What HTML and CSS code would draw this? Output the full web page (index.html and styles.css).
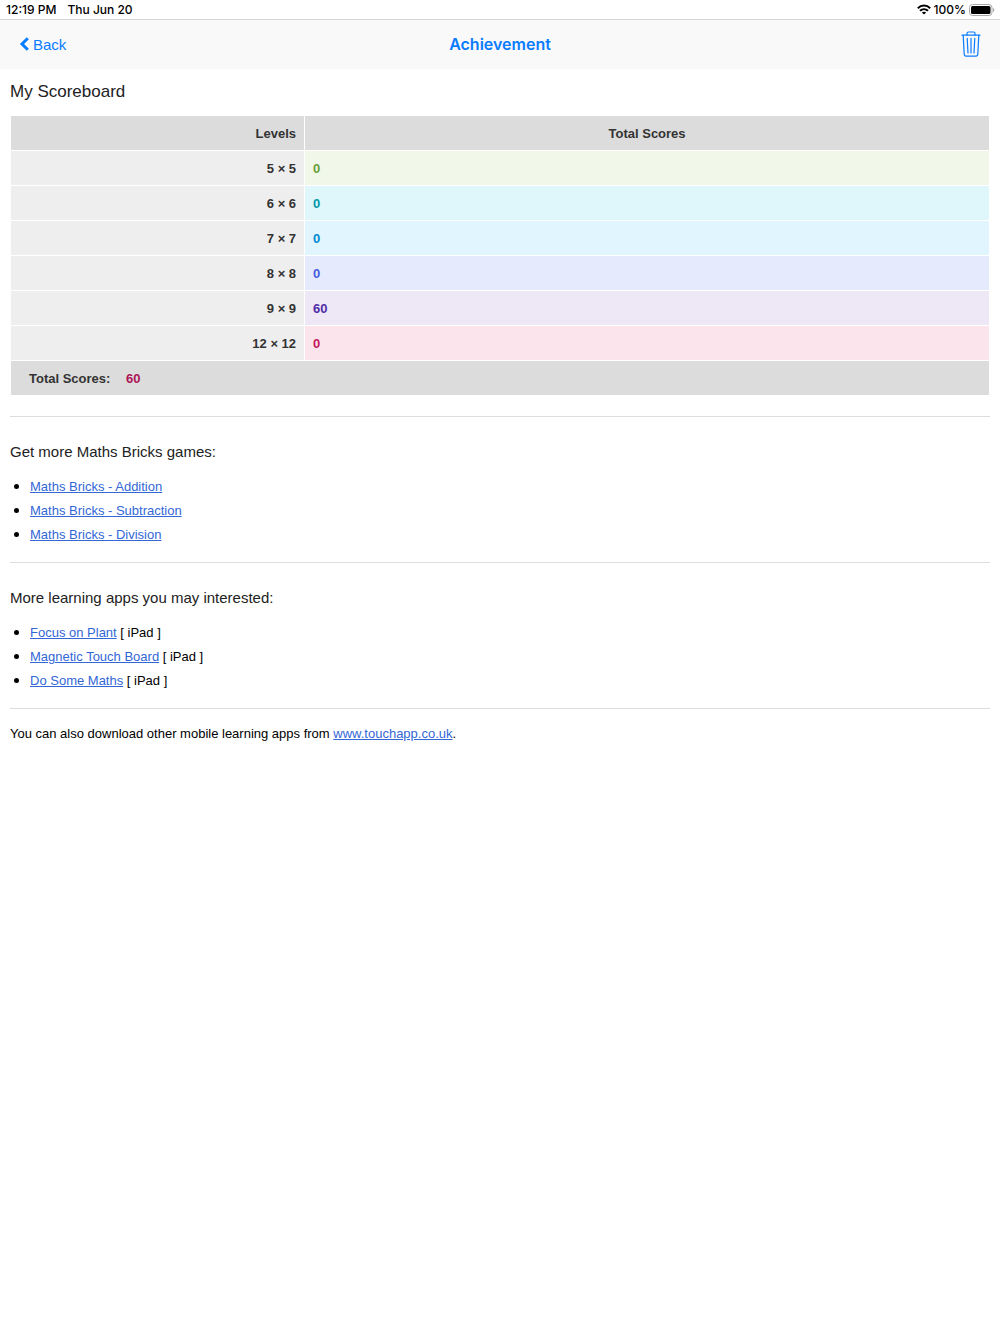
FILE: index.html
```html
<!DOCTYPE html>
<html lang="en">
<head>
  <meta charset="UTF-8">
  <meta name="viewport" content="width=device-width, initial-scale=1">
  <title>Achievement</title>
  <link rel="stylesheet" href="styles.css">
</head>
<body>

  <div class="status-bar">
    <span>12:19 PM</span>
    <span class="date">Thu Jun 20</span>
    <div class="status-right">
      <svg class="wifi" width="14" height="11" viewBox="0 0 14 11" fill="none" stroke="#000" stroke-width="2">
        <path d="M0.8 4.2C4.4 0.7 9.6 0.7 13.2 4.2"/>
        <path d="M3 6.8C5.3 4.6 8.7 4.6 11 6.8"/>
        <path d="M7 10.6L4.8 8.6C6 7.4 8 7.4 9.2 8.6Z" fill="#000" stroke="none"/>
      </svg>
      <span>100%</span>
      <svg class="battery" width="26" height="12" viewBox="0 0 26 12">
        <rect x="0.5" y="0.5" width="22.5" height="11" rx="3" fill="#fff" stroke="#aaa"/>
        <rect x="2" y="2" width="19.5" height="8" rx="1.5" fill="#000"/>
        <path d="M24 4C25.8 4.6 25.8 7.4 24 8Z" fill="#aaa"/>
      </svg>
    </div>
  </div>

  <header class="navbar">
    <button type="button" class="back">
      <svg width="10" height="14" viewBox="0 0 10 14" fill="none" stroke="currentColor" stroke-width="3">
        <path d="M8.8 1.2L3 7L8.8 12.8"/>
      </svg>
      Back
    </button>
    <h1>Achievement</h1>
    <button type="button" class="trash" aria-label="Clear scores">
      <svg width="20" height="26" viewBox="0 0 20 26" fill="none" stroke="currentColor" stroke-width="1.2" stroke-linejoin="round" stroke-linecap="round">
        <path d="M1 4.2H19"/>
        <path d="M6 4V2.4C6 1.4 6.6 1 7.4 1H12.6C13.4 1 14 1.4 14 2.4V4"/>
        <path d="M2.2 4.4L3.2 23.4C3.3 24.6 3.8 25.2 5 25.2H15C16.2 25.2 16.7 24.6 16.8 23.4L17.8 4.4"/>
        <path d="M6.2 7.4L7 22M10 7.4V22M13.8 7.4L13 22"/>
      </svg>
    </button>
  </header>

  <main>
    <h2>My Scoreboard</h2>
    <table class="scores">
      <thead>
        <tr><th class="level">Levels</th><th>Total Scores</th></tr>
      </thead>
      <tbody>
        <tr class="green"><th class="level">5 × 5</th><td>0</td></tr>
        <tr class="cyan"><th class="level">6 × 6</th><td>0</td></tr>
        <tr class="blue"><th class="level">7 × 7</th><td>0</td></tr>
        <tr class="indigo"><th class="level">8 × 8</th><td>0</td></tr>
        <tr class="purple"><th class="level">9 × 9</th><td>60</td></tr>
        <tr class="pink"><th class="level">12 × 12</th><td>0</td></tr>
      </tbody>
      <tfoot>
        <tr><td colspan="2">Total Scores: <span class="total">60</span></td></tr>
      </tfoot>
    </table>

    <section>
      <h3>Get more Maths Bricks games:</h3>
      <ul>
        <li><a href="#">Maths Bricks - Addition</a></li>
        <li><a href="#">Maths Bricks - Subtraction</a></li>
        <li><a href="#">Maths Bricks - Division</a></li>
      </ul>
    </section>

    <section>
      <h3>More learning apps you may interested:</h3>
      <ul>
        <li><a href="#">Focus on Plant</a> [ iPad ]</li>
        <li><a href="#">Magnetic Touch Board</a> [ iPad ]</li>
        <li><a href="#">Do Some Maths</a> [ iPad ]</li>
      </ul>
    </section>

    <p class="download">You can also download other mobile learning apps from <a href="#">www.touchapp.co.uk</a>.</p>
  </main>

</body>
</html>
```

FILE: styles.css
```css
* {
  box-sizing: border-box;
}
body {
  margin: 0;
  background: #ffffff;
  color: #000000;
  font-family: "Liberation Sans", Arial, sans-serif;
  font-size: 13px;
}
.status-bar {
  display: flex;
  align-items: center;
  height: 20px;
  padding: 0 5px 0 6px;
  border-bottom: 1px solid #d4d4d4;
  background: #ffffff;
  font-family: Inter, sans-serif;
  font-size: 12px;
  font-weight: 500;
}
.date {
  margin-left: 11px;
}
.status-right {
  display: flex;
  align-items: center;
  gap: 3px;
  margin-left: auto;
}
.navbar {
  display: grid;
  grid-template-columns: 1fr auto 1fr;
  align-items: center;
  height: 49px;
  padding: 0 19px 1px;
  background: #f9f9f9;
  color: #0a7cff;
}
.navbar h1 {
  margin: 0;
  font-family: Inter, sans-serif;
  font-size: 16px;
  font-weight: 600;
}
.navbar button {
  display: flex;
  align-items: center;
  padding: 0;
  border: none;
  background: none;
  color: inherit;
  font-family: inherit;
  font-size: 15px;
  cursor: pointer;
}
.back {
  gap: 4px;
}
.trash {
  justify-self: end;
}
main {
  padding: 12px 10px;
}
h2,
h3 {
  margin: 0;
  color: #222222;
  font-weight: normal;
  line-height: 22px;
}
h2 {
  font-size: 17px;
}
h3 {
  font-size: 15px;
}
.scores {
  width: 100%;
  margin-top: 12px;
  border-spacing: 1px;
  color: #333333;
  font-weight: bold;
}
.scores th,
.scores td {
  height: 34px;
  padding: 0 8px;
}
.scores thead th,
.scores tfoot td {
  background: #dcdcdc;
}
.scores .level {
  width: 30%;
  text-align: right;
}
.scores tbody .level {
  background: #eeeeee;
}
.scores tfoot td {
  padding-left: 18px;
}
.total {
  margin-left: 12px;
  color: #ad1457;
}
.green td {
  background: #f1f7e9;
  color: #689f38;
}
.cyan td {
  background: #dff7fa;
  color: #0097a7;
}
.blue td {
  background: #e1f5fe;
  color: #0288d1;
}
.indigo td {
  background: #e6eafd;
  color: #455ede;
}
.purple td {
  background: #ede7f6;
  color: #512da8;
}
.pink td {
  background: #fce4ec;
  color: #c2185b;
}
section {
  margin-top: 20px;
  padding-top: 24px;
  border-top: 1px solid #dddddd;
}
ul {
  margin: 11px 0 0;
  padding-left: 20px;
}
li {
  line-height: 23px;
}
li::marker {
  font-size: 16px;
}
section + section {
  margin-top: 16px;
}
a {
  color: #3367d6;
  text-underline-offset: 1px;
}
.download {
  margin: 16px 0 0;
  padding-top: 13px;
  border-top: 1px solid #dddddd;
  line-height: 24px;
}
```
